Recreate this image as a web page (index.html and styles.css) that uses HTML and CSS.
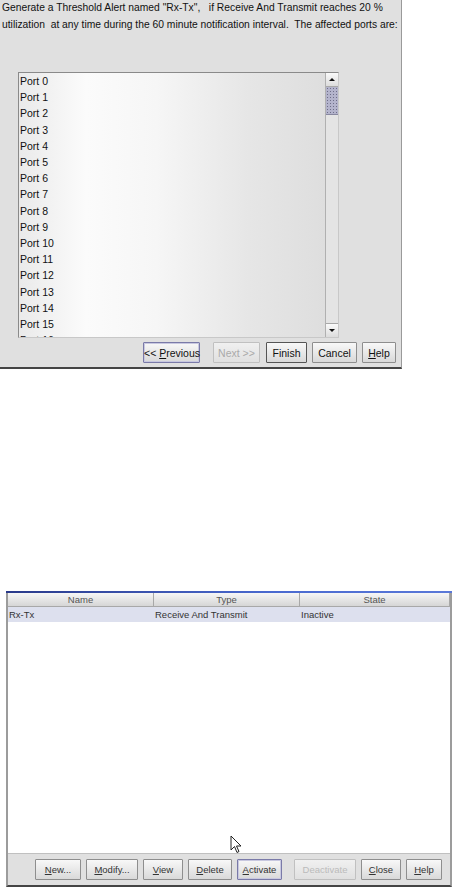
FILE: index.html
```html
<!DOCTYPE html>
<html lang="en">
<head>
    <meta charset="UTF-8">
    <meta name="viewport" content="width=device-width, initial-scale=1.0">
    <title>Threshold Alerts</title>
    <link rel="stylesheet" href="styles.css">
</head>
<body>
    <!-- Wizard: summary page -->
    <div class="wizard">
        <p class="summary">Generate a Threshold Alert named "Rx-Tx",&nbsp;&nbsp; if Receive And Transmit reaches 20 %<br>utilization&nbsp; at any time during the 60 minute notification interval.&nbsp; The affected ports are:</p>

        <div class="ports">
            <ul class="port-list">
                <li>Port 0</li>
                <li>Port 1</li>
                <li>Port 2</li>
                <li>Port 3</li>
                <li>Port 4</li>
                <li>Port 5</li>
                <li>Port 6</li>
                <li>Port 7</li>
                <li>Port 8</li>
                <li>Port 9</li>
                <li>Port 10</li>
                <li>Port 11</li>
                <li>Port 12</li>
                <li>Port 13</li>
                <li>Port 14</li>
                <li>Port 15</li>
                <li>Port 16</li>
            </ul>
            <div class="scrollbar">
                <div class="arrow up"></div>
                <div class="thumb"></div>
                <div class="track"></div>
                <div class="arrow down"></div>
            </div>
        </div>

        <div class="wizard-buttons">
            <button class="btn focused w-prev">&lt;&lt; <u>P</u>revious</button>
            <button class="btn disabled w-next">Next &gt;&gt;</button>
            <button class="btn default w-finish">Finish</button>
            <button class="btn w-cancel">Cancel</button>
            <button class="btn w-help"><u>H</u>elp</button>
        </div>
    </div>

    <!-- Alert manager window -->
    <div class="manager">
        <div class="title-edge"></div>
        <div class="table">
            <div class="table-head">
                <div>Name</div>
                <div>Type</div>
                <div>State</div>
            </div>
            <div class="table-row selected">
                <div>Rx-Tx</div>
                <div>Receive And Transmit</div>
                <div>Inactive</div>
            </div>
            <svg class="cursor" width="13" height="20" viewBox="0 0 13 20">
                <path d="M1 1 L1 15 L4.5 11.5 L7 17.5 L9 16.5 L6.5 11 L11 11 Z" fill="#fff" stroke="#222" stroke-width="1"/>
            </svg>
        </div>
        <div class="manager-buttons">
            <button class="btn m-new"><u>N</u>ew...</button>
            <button class="btn m-modify"><u>M</u>odify...</button>
            <button class="btn m-view"><u>V</u>iew</button>
            <button class="btn m-delete"><u>D</u>elete</button>
            <button class="btn focused m-activate"><u>A</u>ctivate</button>
            <button class="btn disabled m-deactivate">Deactivate</button>
            <button class="btn m-close"><u>C</u>lose</button>
            <button class="btn m-help"><u>H</u>elp</button>
        </div>
    </div>
</body>
</html>
```

FILE: styles.css
```css
body {
    margin: 0;
    background: #fff;
    font-family: "Liberation Sans", Arial, sans-serif;
    color: #111;
}

/* ---------- wizard ---------- */

.wizard {
    width: 401px;
    height: 367px;
    background: #e0e0e0;
    border-right: 1px solid #9a9a9a;
    border-bottom: 2px solid #444;
    display: flex;
    flex-direction: column;
}

.summary {
    margin: 0;
    padding: 0 0 0 2px;
    font-size: 10.3px;
    line-height: 16.5px;
    white-space: nowrap;
}

.ports {
    display: flex;
    margin: 39px 0 0 18px;
    width: 319px;
    height: 264px;
    border: 1px solid #8a8a8a;
    border-right-color: #c8c8c8;
    border-bottom-color: #c8c8c8;
    overflow: hidden;
}

.port-list {
    flex: 1;
    list-style: none;
    margin: 0;
    padding: 0 0 0 1px;
    background: linear-gradient(to right, #eaeaea 0%, #fbfbfb 22%, #f6f6f6 45%, #e6e6e6 75%, #dedede 100%);
    font-size: 10.5px;
    line-height: 16.2px;
    overflow: hidden;
}

.scrollbar {
    width: 12px;
    display: flex;
    flex-direction: column;
    background: #e4e4e4;
    border-left: 1px solid #b0b0b0;
}

.arrow {
    height: 13px;
    background: linear-gradient(#fafafa, #dcdcdc);
    border-bottom: 1px solid #a8a8a8;
    position: relative;
}

.arrow.down {
    border-bottom: none;
    border-top: 1px solid #a8a8a8;
}

.arrow::after {
    content: "";
    position: absolute;
    left: 3px;
    top: 5px;
    border-left: 3px solid transparent;
    border-right: 3px solid transparent;
}

.arrow.up::after {
    border-bottom: 3px solid #111;
}

.arrow.down::after {
    border-top: 3px solid #111;
}

.thumb {
    height: 27px;
    background-color: #b4b4cc;
    background-image: radial-gradient(#6e6e88 0.6px, transparent 0.8px);
    background-size: 3px 3px;
    border-bottom: 1px solid #8888a0;
}

.track {
    flex: 1;
}

.wizard-buttons {
    display: flex;
    margin-top: 4px;
    padding-left: 143px;
    gap: 5px;
}

.w-prev { width: 57px; margin-right: 8px; }
.w-next { width: 47px; margin-right: 1px; }
.w-finish { width: 41px; }
.w-cancel { width: 45px; }
.w-help { width: 34px; }

/* ---------- buttons ---------- */

.btn {
    height: 21px;
    padding: 0;
    white-space: nowrap;
    font-family: "Liberation Sans", Arial, sans-serif;
    font-size: 10.5px;
    color: #111;
    background: linear-gradient(#f8f8f8, #d9d9d9);
    border: 1px solid #8e8e8e;
    border-radius: 1px;
}

.btn.focused {
    border-color: #7a7aa8;
    box-shadow: inset 0 0 0 1px #c8c8e0;
}

.btn.default {
    border-color: #555;
}

.btn.disabled {
    color: #aaa;
    border-color: #c0c0c0;
    background: linear-gradient(#f0f0f0, #e0e0e0);
}

/* ---------- manager window ---------- */

.manager {
    box-sizing: border-box;
    margin: 222px 0 0 6px;
    width: 446px;
    border-left: 2px solid #9c9c9c;
    border-right: 2px solid #9c9c9c;
    border-bottom: 2px solid #444;
    background: #e0e0e0;
}

.title-edge {
    height: 2px;
    margin: 0 -2px;
    background: linear-gradient(to right, #2a3a8a, #4a6ad0 60%, #5a78d8);
}

.table {
    position: relative;
    height: 260px;
    background: #fff;
    border-bottom: 1px solid #c0c0c0;
    font-size: 9.5px;
    color: #333;
}

.table-head,
.table-row {
    display: grid;
    grid-template-columns: 146px 146px 1fr;
}

.table-head {
    height: 13px;
    line-height: 13px;
    text-align: center;
    color: #555;
    background: linear-gradient(#f6f6f6, #d6d6d6);
    border-bottom: 1px solid #a8a8a8;
}

.table-head div {
    border-right: 1px solid #a8a8a8;
}

.table-row {
    height: 15px;
    line-height: 15px;
}

.table-row div {
    padding-left: 1px;
}

.table-row.selected {
    background: #dde0ee;
}

.cursor {
    position: absolute;
    left: 222px;
    top: 242px;
}

.manager-buttons {
    display: flex;
    gap: 5px;
    height: 31px;
    padding: 5px 0 0 27px;
    box-sizing: border-box;
}

.manager-buttons .btn {
    font-size: 9.5px;
    color: #333;
}

.manager-buttons .btn.disabled {
    color: #bbb;
}

.m-new { width: 46px; }
.m-modify { width: 52px; }
.m-view { width: 40px; }
.m-delete { width: 44px; }
.m-activate { width: 45px; margin-right: 7px; }
.m-deactivate { width: 62px; }
.m-close { width: 40px; }
.m-help { width: 36px; }
```
